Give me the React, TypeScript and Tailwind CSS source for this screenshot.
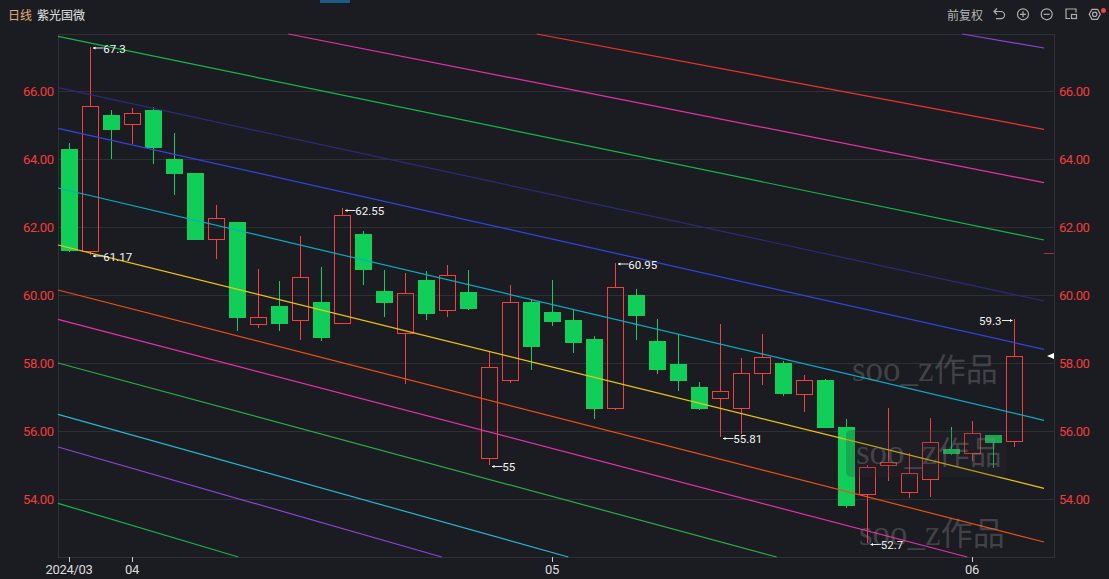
import React from "react";

type Kind = "up" | "down";
// wickTop, bodyTop, bodyBottom, wickBottom (pixel rows), kind
type Candle = [number, number, number, number, Kind];

const candles: Candle[] = [
  [143, 149, 251, 252, "down"],
  [47, 106, 251, 255, "up"],
  [110, 115, 130, 159, "down"],
  [108, 113, 124, 144, "up"],
  [107, 110, 148, 164, "down"],
  [133, 159, 174, 195, "down"],
  [173, 173, 240, 240, "down"],
  [205, 218, 239, 259, "up"],
  [222, 222, 318, 331, "down"],
  [269, 317, 324, 328, "up"],
  [281, 306, 324, 331, "down"],
  [236, 277, 320, 340, "up"],
  [267, 302, 338, 341, "down"],
  [208, 215, 323, 323, "up"],
  [231, 234, 270, 285, "down"],
  [270, 291, 303, 317, "down"],
  [273, 293, 333, 384, "up"],
  [271, 280, 314, 320, "down"],
  [265, 275, 310, 317, "up"],
  [270, 292, 309, 310, "down"],
  [352, 367, 458, 465, "up"],
  [285, 302, 380, 383, "up"],
  [299, 302, 347, 370, "down"],
  [280, 312, 322, 326, "down"],
  [309, 320, 343, 353, "down"],
  [336, 339, 409, 419, "down"],
  [263, 287, 408, 410, "up"],
  [289, 295, 316, 340, "down"],
  [319, 341, 370, 374, "down"],
  [334, 364, 381, 391, "down"],
  [382, 387, 409, 410, "down"],
  [324, 391, 398, 437, "up"],
  [358, 373, 408, 434, "up"],
  [334, 357, 373, 385, "up"],
  [361, 363, 394, 396, "down"],
  [375, 380, 394, 412, "up"],
  [379, 380, 428, 428, "down"],
  [419, 427, 506, 508, "down"],
  [465, 467, 494, 543, "up"],
  [408, 462, 465, 481, "up"],
  [453, 473, 492, 498, "up"],
  [418, 442, 479, 497, "up"],
  [427, 449, 454, 455, "down"],
  [421, 433, 453, 461, "up"],
  [443, 435, 443, 468, "down"],
  [319, 356, 441, 447, "up"],
];

const lines = [
  { x1: 962.3, y1: 34, x2: 1044, y2: 48, color: "#8a45d6" },
  { x1: 536.7, y1: 34, x2: 1044, y2: 129.3, color: "#ee3430" },
  { x1: 288.3, y1: 34, x2: 1044, y2: 182.7, color: "#e332a6" },
  { x1: 58, y1: 36.3, x2: 1044, y2: 240, color: "#12b84e" },
  { x1: 58, y1: 87.7, x2: 1044, y2: 301, color: "#2b2b78" },
  { x1: 58, y1: 128.3, x2: 1044, y2: 349.3, color: "#3344e0" },
  { x1: 58, y1: 188, x2: 1044, y2: 420.3, color: "#05afc4" },
  { x1: 58, y1: 245, x2: 1044, y2: 488.3, color: "#efc808" },
  { x1: 58, y1: 290, x2: 1044, y2: 542, color: "#ea5014" },
  { x1: 58, y1: 319.3, x2: 967.3, y2: 557, color: "#e332a6" },
  { x1: 58, y1: 363, x2: 776.7, y2: 557, color: "#28ac46" },
  { x1: 58, y1: 414.3, x2: 568.3, y2: 557, color: "#22bace" },
  { x1: 58, y1: 447, x2: 441.7, y2: 557, color: "#8a45d6" },
  { x1: 58, y1: 503.3, x2: 238.3, y2: 557, color: "#12b84e" },
];

const priceRows = [
  { label: "66.00", y: 91 },
  { label: "64.00", y: 159 },
  { label: "62.00", y: 227 },
  { label: "60.00", y: 295 },
  { label: "58.00", y: 363 },
  { label: "56.00", y: 431 },
  { label: "54.00", y: 499 },
];

const dateTicks = [
  { label: "2024/03", x: 69 },
  { label: "04", x: 132 },
  { label: "05", x: 552 },
  { label: "06", x: 972 },
];

const marks = [
  { label: "67.3", x: 93, y: 48 },
  { label: "61.17", x: 93, y: 256 },
  { label: "62.55", x: 345, y: 210.5 },
  { label: "60.95", x: 618, y: 264 },
  { label: "55", x: 492, y: 466.5 },
  { label: "55.81", x: 723, y: 438.5 },
  { label: "52.7", x: 870.5, y: 544.5 },
];

const watermarks = [
  { x: 852, y: 381 },
  { x: 856, y: 464 },
  { x: 859, y: 545 },
];

function candleX(index: number) {
  return 69.5 + index * 21;
}

function CandleShape({ candle, index }: { candle: Candle; index: number }) {
  const [wickTop, bodyTop, bodyBottom, wickBottom, kind] = candle;
  const x = candleX(index);
  const color = kind === "up" ? "#f53e3e" : "#10cf58";

  return (
    <g shapeRendering="crispEdges">
      <line x1={x} x2={x} y1={wickTop} y2={bodyTop} stroke={color} />
      <line x1={x} x2={x} y1={bodyBottom} y2={wickBottom} stroke={color} />
      {kind === "up" ? (
        <rect x={x - 8} y={bodyTop + 0.5} width={16} height={bodyBottom - bodyTop} fill="none" stroke={color} />
      ) : (
        <rect x={x - 8.5} y={bodyTop} width={17} height={bodyBottom - bodyTop} fill={color} />
      )}
    </g>
  );
}

function Chart() {
  return (
    <svg className="block h-[549px] w-[1109px]" viewBox="0 30 1109 549">
      <g stroke="#2f3034" shapeRendering="crispEdges">
        <line x1={58} x2={1054} y1={34.5} y2={34.5} />
        {priceRows.map((row) => (
          <line key={row.label} x1={58} x2={1054} y1={row.y + 0.5} y2={row.y + 0.5} />
        ))}
        <line x1={58} x2={1054} y1={557.5} y2={557.5} />
        <line x1={58.5} x2={58.5} y1={34} y2={558} />
        <line x1={1054.5} x2={1054.5} y1={34} y2={558} />
      </g>

      {candles.map((candle, index) => (
        <CandleShape key={index} candle={candle} index={index} />
      ))}

      {lines.map((line) => (
        <line
          key={`${line.x1}-${line.y1}`}
          x1={line.x1}
          y1={line.y1}
          x2={line.x2}
          y2={line.y2}
          stroke={line.color}
          strokeWidth={1.2}
        />
      ))}

      {priceRows.map((row) => (
        <g key={row.label} className="fill-[#f23c3c] text-[13px] tracking-[-0.45px] [font-family:Roboto,sans-serif]">
          <text x={53.5} y={row.y + 0.5} textAnchor="end" dominantBaseline="central">
            {row.label}
          </text>
          <text x={1059} y={row.y + 0.5} dominantBaseline="central">
            {row.label}
          </text>
        </g>
      ))}

      {dateTicks.map((tick) => (
        <g key={tick.label}>
          <line x1={tick.x + 0.5} x2={tick.x + 0.5} y1={557} y2={562} stroke="#d0d0d0" shapeRendering="crispEdges" />
          <text
            x={tick.x}
            y={569.5}
            textAnchor="middle"
            dominantBaseline="central"
            className="fill-[#dcdcdc] text-[13px] tracking-[-0.3px] [font-family:Roboto,sans-serif]"
          >
            {tick.label}
          </text>
        </g>
      ))}

      {marks.map((mark) => (
        <g key={mark.label}>
          <path d={`M${mark.x} ${mark.y}h10.5`} stroke="#e8e8e8" />
          <path d={`M${mark.x} ${mark.y}l2.5 -1.5v3z`} fill="#ffffff" />
          <text
            x={mark.x + 10.3}
            y={mark.y + 0.8}
            dominantBaseline="central"
            className="fill-[#f4f4f4] text-[11.5px] [font-family:Roboto,sans-serif]"
          >
            {mark.label}
          </text>
        </g>
      ))}
      <g>
        <path d="M1002 320.5h10.5" stroke="#e8e8e8" />
        <path d="M1012.5 320.5l-2.5 -1.5v3z" fill="#ffffff" />
        <text
          x={1001.5}
          y={320.8}
          textAnchor="end"
          dominantBaseline="central"
          className="fill-[#f4f4f4] text-[11.5px] [font-family:Roboto,sans-serif]"
        >
          59.3
        </text>
      </g>

      {/* right edge markers */}
      <line x1={1044} x2={1054} y1={253.5} y2={253.5} stroke="#a83232" shapeRendering="crispEdges" />
      <path d="M1047 356l7 -3v6z" fill="#ffffff" />

      <rect x={846} y={430} width={160} height={47} rx={5} fill="#2a2b30" fillOpacity={0.22} />
      {watermarks.map((mark) => (
        <text
          key={mark.y}
          x={mark.x}
          y={mark.y}
          className="fill-[#8c8c90]/35 [font-family:'Liberation_Serif','Noto_Sans_CJK_SC',serif]"
        >
          <tspan className="text-[35px]">soo_z</tspan>
          <tspan className="text-[32px]">作品</tspan>
        </text>
      ))}
    </svg>
  );
}

function ToolbarIcons() {
  return (
    <svg className="h-[26px] w-[124px]" viewBox="985 2 124 26" fill="none" stroke="#aeaeae" strokeWidth={1.2}>
      <path d="M997 8.5L994 11.5L997 14.5M994 11.5H1001a3.6 3.6 0 0 1 0 7.2H996" />
      <circle cx={1023} cy={14.3} r={5.5} />
      <path d="M1020 14.3h6M1023 11.3v6" />
      <circle cx={1046.7} cy={14.3} r={5.5} />
      <path d="M1043.7 14.3h6" />
      <path d="M1070 18.5H1066V9H1076V12.5" />
      <rect x={1071.5} y={14.5} width={5} height={4} />
      <path d="M1089.2 14.3L1092 9.3H1097.5L1100.3 14.3L1097.5 19.3H1092Z" />
      <circle cx={1094.7} cy={14.3} r={2.2} />
      <circle cx={1103.5} cy={10.5} r={2.5} fill="#f53e3e" stroke="none" />
    </svg>
  );
}

export default function App() {
  return (
    <div className="relative flex h-[579px] w-[1109px] flex-col overflow-hidden bg-[#1b1c21]">
      <div className="absolute left-[320px] top-0 h-[3px] w-[30px] bg-[#1c5a88]" />
      <header className="flex h-[30px] items-center justify-between pl-[8px] text-[12px] [font-family:'Noto_Sans_CJK_SC',sans-serif]">
        <div className="flex items-center gap-[5px]">
          <span className="text-[#e5ae78]">日线</span>
          <span className="text-[#e8e8e8]">紫光国微</span>
        </div>
        <div className="flex items-center">
          <span className="mr-[2px] text-[#b4b4b4]">前复权</span>
          <ToolbarIcons />
        </div>
      </header>
      <Chart />
    </div>
  );
}
